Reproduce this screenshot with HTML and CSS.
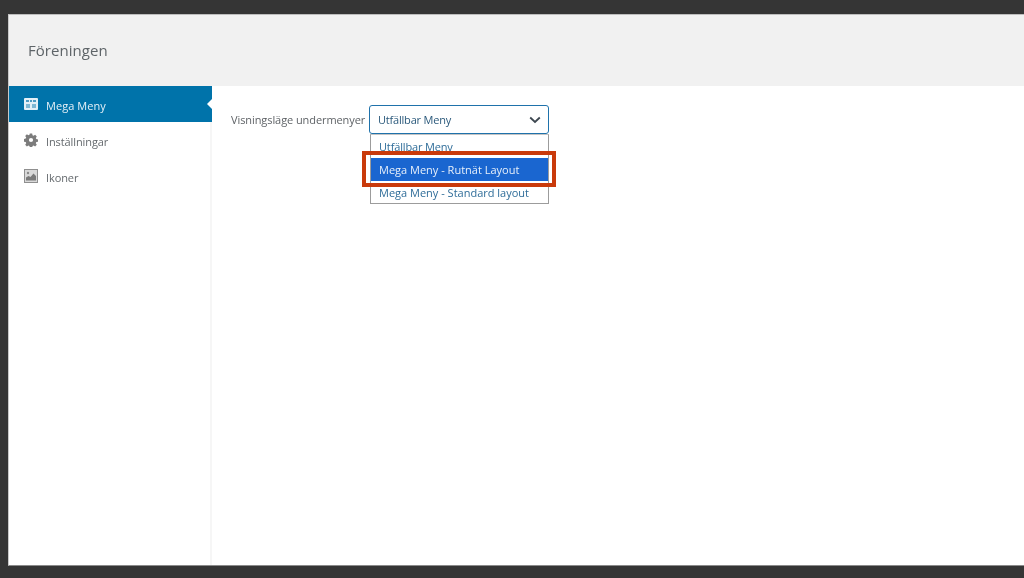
FILE: index.html
```html
<!DOCTYPE html>
<html lang="sv">
<head>
<meta charset="utf-8">
<title>Föreningen</title>
<link rel="stylesheet" href="styles.css">
</head>
<body>
<div class="window">
  <header class="header"><h1 class="title">Föreningen</h1></header>
  <div class="main">
    <nav class="sidebar">
      <a class="nav-item active">
        <svg class="nav-icon" viewBox="0 0 14 14"><rect x="0" y="1" width="14" height="12" rx="1" fill="#e4f0f7"/><path d="M2 3h3v2H2zM6 3h2v2H6zM9 3h3v2H9z" fill="#4f9cc4"/><path d="M2 7h4v4H2zM8 7h4v4H8z" fill="#7fb8d4"/></svg>
        <span>Mega Meny</span>
      </a>
      <a class="nav-item">
        <svg class="nav-icon" viewBox="0 0 14 14"><path fill="#7c7c7c" fill-rule="evenodd" d="M5.8 0.5h2.400l.3 1.800 1.100.5 1.500-1 1.700 1.700-1 1.500.5 1.100 1.800.3v2.400l-1.800.3-.5 1.100 1 1.500-1.700 1.700-1.500-1-1.100.5-.3 1.800H5.800l-.3-1.800-1.100-.5-1.500 1-1.700-1.700 1-1.500-.5-1.100-1.800-.3V5.900l1.800-.3.5-1.100-1-1.500 1.700-1.700 1.500 1 1.100-.5zM7 4.900a2.100 2.100 0 1 0 0 4.200 2.100 2.100 0 0 0 0-4.200z"/></svg>
        <span>Inställningar</span>
      </a>
      <a class="nav-item">
        <svg class="nav-icon" viewBox="0 0 14 14"><rect x="0.5" y="0.5" width="13" height="13" fill="#d9d9d9" stroke="#8f8f8f"/><path d="M2 11.500V8.500l2.500-1.500 2 1 3-3.500 2.500 2.500v4.500z" fill="#7a7a7a"/><circle cx="4" cy="4" r="1.200" fill="#8a8a8a"/></svg>
        <span>Ikoner</span>
      </a>
    </nav>
    <section class="content">
      <div class="field">
        <label class="field-label">Visningsläge undermenyer</label>
        <div class="select-wrap">
          <div class="select">
            <span class="select-text">Utfällbar Meny</span>
            <svg class="chevron" viewBox="0 0 12 8"><path d="M1.200 1.500 6 6l4.800-4.500" fill="none" stroke="#3d4750" stroke-width="1.800"/></svg>
          </div>
          <ul class="options">
            <li class="option first">Utfällbar Meny</li>
            <li class="option selected">Mega Meny - Rutnät Layout</li>
            <li class="option">Mega Meny - Standard layout</li>
          </ul>
          <div class="highlight"></div>
        </div>
      </div>
    </section>
  </div>
</div>
</body>
</html>
```
FILE: styles.css
```css
* { box-sizing: border-box; }
html, body { margin: 0; height: 100%; }
body {
  background: #353535;
  padding: 14px 0 12px 8px;
  font-family: "Open Sans", "Liberation Sans", sans-serif;
  overflow: hidden;
}
.window {
  height: 552px;
  display: flex;
  flex-direction: column;
  background: #fff;
  border-left: 1px solid #c9c9c9;
  border-top: 1px solid #bdbdbd;
  border-bottom: 1px solid #8a8a8a;
  filter: blur(0.35px);
}
.header {
  height: 71px;
  flex: none;
  background: #f1f1f1;
  display: flex;
  align-items: center;
  padding: 0 0 2px 19px;
}
.title {
  margin: 0;
  font-size: 15px;
  font-weight: 400;
  letter-spacing: 0.05px;
  color: #5e6468;
}
.main { flex: 1; display: flex; min-height: 0; }
.sidebar {
  width: 203px;
  flex: none;
  border-right: 2px solid #f6f6f6;
}
.nav-item {
  position: relative;
  height: 36px;
  display: flex;
  align-items: center;
  gap: 8px;
  padding: 2px 0 0 15px;
  font-size: 11px;
  letter-spacing: -0.1px;
  color: #656a6e;
}
.nav-item.active {
  background: #0073aa;
  color: #e4f0f7;
  margin-right: -2px;
  letter-spacing: 0.05px;
}
.nav-item.active::after {
  content: "";
  position: absolute;
  right: 0;
  top: 13px;
  border: 5px solid transparent;
  border-right-color: #fff;
  border-left: 0;
}
.nav-icon { width: 14px; height: 14px; flex: none; margin-top: -2px; }
.content { flex: 1; padding: 19px 0 0 19px; }
.field { display: flex; align-items: flex-start; gap: 4px; }
.field-label {
  width: 134px;
  height: 29px;
  line-height: 29px;
  font-size: 11px;
  letter-spacing: -0.08px;
  color: #5f6367;
  white-space: nowrap;
}
.select-wrap { position: relative; width: 180px; }
.select {
  height: 29px;
  border: 1.500px solid #1f72ab;
  border-radius: 3px;
  display: flex;
  align-items: center;
  justify-content: space-between;
  padding: 0 7px 0 8px;
  font-size: 11px;
  color: #2c5a7c;
  background: #fff;
}
.select-text { letter-spacing: -0.2px; }
.chevron { width: 12px; height: 8px; }
.options {
  position: absolute;
  left: 1px;
  right: 0;
  top: 29px;
  margin: 0;
  padding: 0;
  list-style: none;
  height: 70px;
  background: #fff;
  border: 1px solid #9c9c9c;
  border-top-color: #c4c4c4;
  font-size: 11px;
  color: #2f6d99;
}
.option {
  height: 23px;
  line-height: 23px;
  padding-left: 8px;
  white-space: nowrap;
}
.first { letter-spacing: -0.15px; }
.selected { background: #1a66d0; color: #e6effa; }
.highlight {
  position: absolute;
  left: -7px;
  top: 46px;
  width: 194px;
  height: 36px;
  border: 4px solid #c93a0b;
}
```
